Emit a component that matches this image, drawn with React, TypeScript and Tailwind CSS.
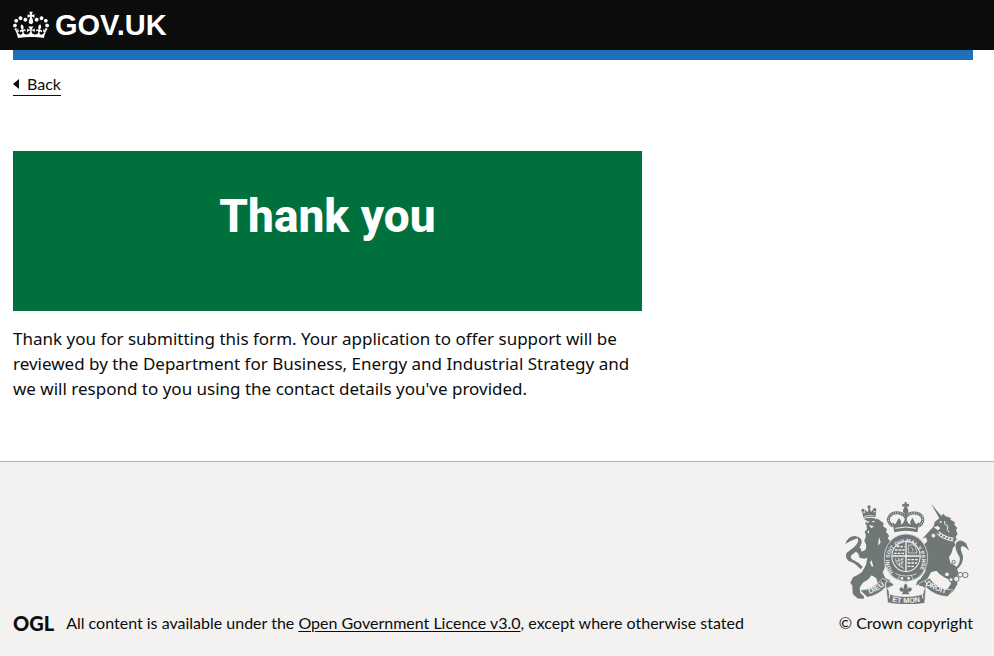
function Crown() {
  return (
    <svg aria-hidden="true" viewBox="0 0 132 97" width="36" height="30" className="fill-current">
      <path
        fillRule="evenodd"
        d="M25 30.2c3.5 1.5 7.7-.2 9.1-3.7 1.5-3.6-.2-7.8-3.9-9.2-3.6-1.4-7.6.3-9.1 3.9-1.4 3.5.3 7.5 3.9 9zM9 39.5c3.6 1.5 7.8-.2 9.2-3.7 1.5-3.6-.2-7.8-3.9-9.1-3.6-1.5-7.6.2-9.1 3.8-1.4 3.5.3 7.5 3.8 9zM4.4 57.2c3.5 1.5 7.7-.2 9.1-3.8 1.5-3.6-.2-7.7-3.9-9.1-3.5-1.5-7.6.3-9.1 3.8-1.4 3.5.3 7.6 3.9 9.1zm38.3-21.4c3.5 1.5 7.7-.2 9.1-3.8 1.5-3.6-.2-7.7-3.9-9.1-3.6-1.5-7.6.3-9.1 3.8-1.3 3.6.4 7.7 3.9 9.1zm64.4-5.6c-3.6 1.5-7.8-.2-9.1-3.7-1.5-3.6.2-7.8 3.8-9.2 3.6-1.4 7.7.3 9.2 3.9 1.3 3.5-.4 7.5-3.9 9zm15.9 9.3c-3.6 1.5-7.7-.2-9.1-3.7-1.5-3.6.2-7.8 3.7-9.1 3.6-1.5 7.7.2 9.2 3.8 1.5 3.5-.3 7.5-3.8 9zm4.7 17.7c-3.6 1.5-7.8-.2-9.2-3.8-1.5-3.6.2-7.7 3.9-9.1 3.6-1.5 7.7.3 9.2 3.8 1.3 3.5-.4 7.6-3.9 9.1zM89.3 35.8c-3.6 1.5-7.8-.2-9.2-3.8-1.4-3.6.2-7.7 3.9-9.1 3.6-1.5 7.7.3 9.2 3.8 1.4 3.6-.3 7.7-3.9 9.1zM69.7 17.7l8.9 4.7V9.3l-8.9 2.8c-.2-.3-.5-.6-.9-.9L72.4 0H59.6l3.5 11.2c-.3.3-.6.5-.9.9l-8.8-2.8v13.1l8.8-4.7c.3.3.6.7.9.9l-5 15.4v.1c-.2.8-.4 1.6-.4 2.4 0 4.1 3.1 7.5 7 8.1h.2c.3 0 .7.1 1 .1.4 0 .7 0 1-.1h.2c4-.6 7.1-4.1 7.1-8.1 0-.8-.1-1.7-.4-2.4V34l-5.1-15.4c.4-.2.7-.6 1-.9zM66 92.8c16.9 0 32.8 1.1 47.1 3.2 4-16.9 8.9-26.7 14-33.5l-9.6-3.4c1 4.9 1.1 7.2 0 10.2-1.5-1.4-3-4.3-4.2-8.7L108.6 76c2.8-2 5-3.2 7.5-3.3-4.4 9.4-10 11.9-13.6 11.2-4.3-.8-6.3-4.6-5.6-7.9 1-4.7 5.7-5.9 8-.5 4.3-8.7-3-11.4-7.6-8.8 7.1-7.2 7.9-13.5 2.1-21.1-8 6.1-8.1 12.3-4.5 20.8-4.7-5.4-12.1-2.5-9.5 6.2 3.4-5.2 7.9-2 7.2 3.1-.6 4.3-6.4 7.8-13.5 7.2-10.3-.9-10.9-8-11.2-13.8 2.5-.5 7.1 1.8 11 7.3L80.2 60c-4.1 4.4-8 5.3-12.3 5.4 1.4-4.4 8-11.6 8-11.6H55.5s6.4 7.2 7.9 11.6c-4.2-.1-8-1-12.3-5.4l1.4 16.4c3.9-5.5 8.5-7.7 10.9-7.3-.3 5.8-.9 12.8-11.1 13.8-7.2.6-12.9-2.9-13.5-7.2-.7-5 3.8-8.3 7.1-3.1 2.7-8.7-4.6-11.6-9.4-6.2 3.7-8.5 3.6-14.7-4.6-20.8-5.8 7.6-5 13.9 2.2 21.1-4.7-2.6-11.9.1-7.7 8.8 2.3-5.5 7.1-4.2 8.1.5.7 3.3-1.3 7.1-5.7 7.9-3.5.7-9-1.8-13.5-11.2 2.5.1 4.7 1.3 7.5 3.3l-4.7-15.4c-1.2 4.4-2.7 7.2-4.3 8.7-1.1-3-.9-5.3 0-10.2l-9.5 3.4c5 6.9 9.9 16.7 14 33.5 14.8-2.1 30.8-3.2 47.7-3.2z"
      />
    </svg>
  );
}

function RoyalArms() {
  return (
    <svg aria-hidden="true" viewBox="42 36 375 306" width="125" height="102" className="fill-[#6f7777]">
      <defs>
        <path id="garter" d="M190 247A49 54 0 1 1 264 247L246 266" />
        <path id="dieu" d="M112 314Q144 304 169 282" />
        <path id="mon" d="M183 334Q228 344 274 334" />
        <path id="droit" d="M281 278Q308 304 354 312" />
      </defs>

      {/* lion: crown */}
      <path d="M101 84l-5-19 8 5 2-10 8 7 2-14 3 0 4 13 6-8 3 10 7-6-3 20q-18-5-35 2z" />
      <circle cx="117" cy="51" r="5" />
      <circle cx="99" cy="61" r="5" />
      <circle cx="134" cy="59" r="5" />
      <path className="fill-none stroke-[#f3f2f1] stroke-[2]" d="M102 79q16-5 31-1" />
      {/* lion: mane, body and legs */}
      <path d="M101 87q17-7 36-1l8 2 16 12-2 8 12 10-3 7 10 13-5 6 8 11-1 9 9-7 7 9-7 19-14 13-3 14-8 11 0 12-6 12 8 18 13 5 2 7 8 5-3 11-28 1-14-12-5-17-14-9-10 12-17 11-9 14 2 16 12 11-3 7-18-2-14-14-1-24-6-9 8-16 15-8 12-8 12-22 4-21-9 3-14-3-4-12-8-7 7-12 8 3 3 10 12-6 2-14-6-12 5-16-4-12 7-7-2-14-4-4 6-8z" />
      {/* lion: tail */}
      <path d="M92 238Q72 216 56 213Q45 204 49 190Q60 180 72 172Q91 153 82 145Q67 150 46 162Q54 138 75 138Q97 142 95 158Q90 178 64 196Q59 205 70 210Q88 218 98 230z" />
      <g className="fill-[#f3f2f1]">
        <path d="M108 93l12 2-9 5zM126 93l9 0-6 5zM117 105l15 4-8 6zM111 127l6-6 0 9z" />
        <path d="M147 141l5 16-8 10zM124 210l6 18-4 3-6-13z" />
      </g>

      {/* unicorn: horn, head, mane, body */}
      <path d="M303 41l36 43-8 6z" />
      <path d="M311 109l3-13 16-13 9-12 8 8 16 5-2 5 14 8-2 7 9 10-4 6 5 13-6 6 3 10-7 7 3 10-7 8-4 14-8 14 4 17 15 8 9 20-5 18 2 18-13 22-19 14-10-3 12-18 11-17-3-11-15-7-16-10-10-11-16 5-9 16-8 19-13 8-15-5 5-13 9-6 15-23-2-18-4-9-17-6 11 17 9 3-2 10-14-2-14-22-15 3-7-12 7-11 13 4-10-14-12-3-3-10 8-8 10 4 14 17 14-8 11-16 8-8-4-12-11 4z" />
      <path d="M370 238Q393 222 389 202Q371 174 379 158Q391 144 408 160L419 184Q406 169 397 168Q388 171 396 189Q405 212 387 232Q380 240 371 247z" />
      <path className="fill-none stroke-[#f3f2f1] stroke-[11]" d="M323 128q19 17 47 21" />
      <path className="fill-none stroke-[#6f7777] stroke-[6] [stroke-dasharray:6_4]" d="M323 128q19 17 47 21" />
      <path className="fill-none stroke-[#f3f2f1] stroke-[3]" d="M344 93q-4 11 10 16-7 9 4 18" />
      <path className="fill-[#f3f2f1]" d="M311 112l12-4 8 6-7 7z" />
      <circle className="fill-[#f3f2f1]" cx="332" cy="96" r="3" />
      <g className="fill-[#f3f2f1] stroke-[#6f7777] stroke-[3]">
        <circle cx="310" cy="137" r="7" />
        <circle cx="371" cy="216" r="5" />
        <circle cx="351" cy="253" r="7" />
        <circle cx="363" cy="269" r="6" />
        <circle cx="379" cy="267" r="8" />
        <circle cx="391" cy="254" r="7" />
        <circle cx="406" cy="255" r="8" />
      </g>

      {/* imperial crown */}
      <path d="M223 37h8l-1 6 7-2v9l-7-1 3 9h-12l3-9-7 1v-9l7 2z" />
      <circle cx="227" cy="62" r="8" />
      <g className="fill-none stroke-[#6f7777]">
        <path className="stroke-[9]" d="M189 109Q168 93 178 80Q188 66 207 69Q220 71 227 81Q234 70 247 69Q268 67 276 80Q284 95 266 109" />
        <path
          className="stroke-[3] stroke-[#f3f2f1] [stroke-dasharray:3_4]"
          d="M189 109Q168 93 178 80Q188 66 207 69Q220 71 227 81Q234 70 247 69Q268 67 276 80Q284 95 266 109"
        />
        <path className="stroke-[6]" d="M227 66v35" />
      </g>
      <path d="M187 97l9 6 4-7 7-13 7 13-3 8 8-4 8-15 8 15 8 4-3-8 7-13 7 13 4 7 10-6-6 30q-33-9-69 0z" />
      <path className="fill-none stroke-[#f3f2f1] stroke-[3]" d="M196 115q31-8 62 0" />

      {/* garter and shield */}
      <ellipse cx="228" cy="203" rx="66" ry="72" />
      <ellipse className="fill-none stroke-[#f3f2f1] stroke-[2]" cx="228" cy="203" rx="65" ry="71" />
      <ellipse className="fill-[#f3f2f1]" cx="228" cy="199" rx="44" ry="47" />
      <ellipse cx="228" cy="199" rx="41" ry="44" />
      <g className="fill-none stroke-[#f3f2f1]">
        <path className="stroke-[4]" d="M228 155v88M187 198h82" />
        <path
          className="stroke-[4] [stroke-dasharray:8_3]"
          d="M200 170h24M195 180h29M192 190h32M233 209h30M233 219h28M233 229h22"
        />
        <path className="stroke-[2]" d="M235 165h20l6 24h-26zM242 171q10 5 6 13M196 205q3 22 26 30M205 204l5 26M215 204l1 29M197 214l25-8M203 225l19-10" />
        <path className="stroke-[2]" d="M196 251q32 14 64 0M203 272l6-16M250 271l-6-16" />
      </g>
      <g className="fill-[#f3f2f1]">
        <circle cx="216" cy="265" r="4" />
        <circle cx="236" cy="265" r="4" />
      </g>
      <text className="fill-[#f3f2f1] font-['Liberation_Sans'] text-[16px] font-bold">
        <textPath href="#garter">HONI SOIT QUI MAL Y PENSE</textPath>
      </text>

      {/* scroll and motto */}
      <path
        className="stroke-[#f3f2f1] stroke-[2]"
        d="M90 301Q132 299 157 265L176 274Q194 281 191 289Q178 287 172 295Q178 301 178 313Q228 327 279 313Q280 300 285 295Q278 287 266 289Q263 280 282 273L299 265Q322 299 369 300L353 320Q314 318 288 292L284 340Q228 349 173 338L168 290Q145 316 112 322z"
      />
      <path className="fill-none stroke-[#f3f2f1] stroke-[3]" d="M171 273q-9 8-3 20M285 272q9 10 2 20M178 315v10M278 315v10" />
      <path className="fill-[#f3f2f1]" d="M179 291q9-2 13-8l9 12q4 10 0 17l-17-3q1-11-5-18zM276 291q-9-2-13-8l-8 12q-3 10 0 17l17-3q-2-11 4-18z" />
      <path d="M227 280q9 9 4 19 10-14 15-1-4 11-13 6l6 9h-24l6-9q-9 5-13-6 5-13 15 1-5-10 4-19z" />
      <g className="fill-[#f3f2f1] font-['Liberation_Sans'] text-[22px] font-bold [text-anchor:middle]">
        <text>
          <textPath href="#dieu" startOffset="50%">DIEU</textPath>
        </text>
        <text>
          <textPath href="#mon" startOffset="50%">ET MON</textPath>
        </text>
        <text>
          <textPath href="#droit" startOffset="50%">DROIT</textPath>
        </text>
      </g>
    </svg>
  );
}

export default function App() {
  return (
    <div className="flex min-h-screen flex-col bg-white font-[Lato,sans-serif] text-[#0b0c0c]">
      <header>
        <div className="bg-[#0b0c0c] pr-[21px] pl-[13px]">
          <a href="#" className="flex h-[50px] w-fit items-center gap-1.5 text-white">
            <Crown />
            <span className="font-['Liberation_Sans',sans-serif] text-[29px] leading-[30px] font-bold">GOV.UK</span>
          </a>
        </div>
        <div className="mr-[21px] ml-[13px] h-2.5 bg-[#1d70b8]" />
      </header>

      <main className="grow pr-[21px] pl-[13px]">
        <a
          href="#"
          className="mt-[14px] flex w-fit items-center gap-2 border-b border-[#0b0c0c] pb-px text-[16px] leading-5"
        >
          <svg aria-hidden="true" viewBox="0 0 6 10" width="6" height="10" className="fill-current">
            <path d="M0 5l6-5v10z" />
          </svg>
          Back
        </a>

        <div className="mt-[55px] w-full max-w-[629px]">
          <div className="bg-[#00703c] px-9 pt-10 pb-[70px] text-center text-white">
            <h1 className="font-[Roboto,sans-serif] text-[46px] leading-[50px] font-extrabold">Thank you</h1>
          </div>
          <p className="mt-[15px] font-['Noto_Sans',sans-serif] text-[17px] leading-[25px]">
            Thank you for submitting this form. Your application to offer support will be reviewed by the Department for
            Business, Energy and Industrial Strategy and we will respond to you using the contact details you've
            provided.
          </p>
        </div>
      </main>

      <footer className="border-t border-[#b1b4b6] bg-[#f3f2f1] pt-10 pr-[21px] pb-[23px] pl-[13px] text-[16px] leading-5">
        <div className="flex items-end justify-between">
          <div className="flex items-center gap-3">
            <span aria-hidden="true" className="text-[20px] leading-5 font-black">
              OGL
            </span>
            <span>
              All content is available under the{" "}
              <a href="#" className="underline underline-offset-2">
                Open Government Licence v3.0
              </a>
              , except where otherwise stated
            </span>
          </div>
          <a href="#" className="flex flex-col items-end gap-[9px]">
            <span className="pr-1">
              <RoyalArms />
            </span>
            © Crown copyright
          </a>
        </div>
      </footer>
    </div>
  );
}
